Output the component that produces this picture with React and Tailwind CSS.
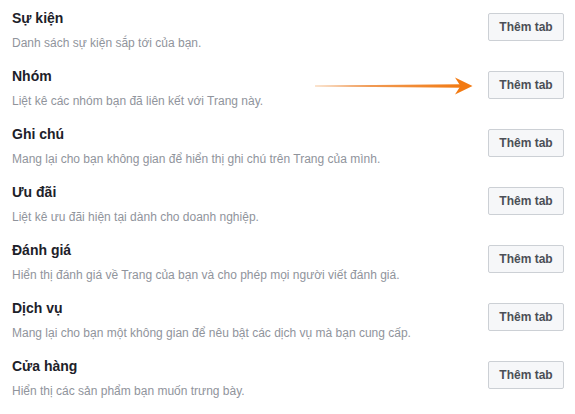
const rows = [
  { title: "Sự kiện", desc: "Danh sách sự kiện sắp tới của bạn." },
  { title: "Nhóm", desc: "Liệt kê các nhóm bạn đã liên kết với Trang này." },
  { title: "Ghi chú", desc: "Mang lại cho bạn không gian để hiển thị ghi chú trên Trang của mình." },
  { title: "Ưu đãi", desc: "Liệt kê ưu đãi hiện tại dành cho doanh nghiệp." },
  { title: "Đánh giá", desc: "Hiển thị đánh giá về Trang của bạn và cho phép mọi người viết đánh giá." },
  { title: "Dịch vụ", desc: "Mang lại cho bạn một không gian để nêu bật các dịch vụ mà bạn cung cấp." },
  { title: "Cửa hàng", desc: "Hiển thị các sản phẩm bạn muốn trưng bày." },
];

// Orange pointer arrow drawn over the second row
function Arrow() {
  return (
    <svg
      className="absolute left-[310px] top-[16px]"
      width="170"
      height="24"
      viewBox="0 0 170 24"
    >
      <defs>
        <linearGradient id="shaft" x1="0" y1="0" x2="1" y2="0">
          <stop offset="0" stopColor="#f6c9a0" />
          <stop offset="0.25" stopColor="#f0a060" />
          <stop offset="1" stopColor="#f27a12" />
        </linearGradient>
      </defs>
      <path d="M5 11.4 L152 10.2 L152 13.8 L5 12.6 Z" fill="url(#shaft)" />
      <path d="M162.5 12 L145 3.5 L150.5 12 L145 20.5 Z" fill="#f27a12" />
    </svg>
  );
}

export default function App() {
  return (
    <div
      className="relative w-[575px] h-[414px] bg-white overflow-hidden"
      style={{ fontFamily: '"Liberation Sans", Arial, sans-serif' }}
    >
      {rows.map((r, i) => (
        <div key={r.title} className="relative flex items-start justify-between h-[58px] pl-3 pr-[11px] pt-[9px]">
          <div className="flex flex-col">
            <div className="text-[14px] leading-[18px] font-bold text-[#1d2129]">{r.title}</div>
            <div className="mt-[8px] text-[12px] leading-[16px] text-[#90949c]">{r.desc}</div>
          </div>
          <button className="mt-[4px] h-[28px] w-[76px] rounded-[2px] border border-[#ccd0d5] bg-[#f6f7f9] text-[12px] font-bold text-[#4b4f56]">
            Thêm tab
          </button>
          {i === 1 && <Arrow />}
        </div>
      ))}
    </div>
  );
}
